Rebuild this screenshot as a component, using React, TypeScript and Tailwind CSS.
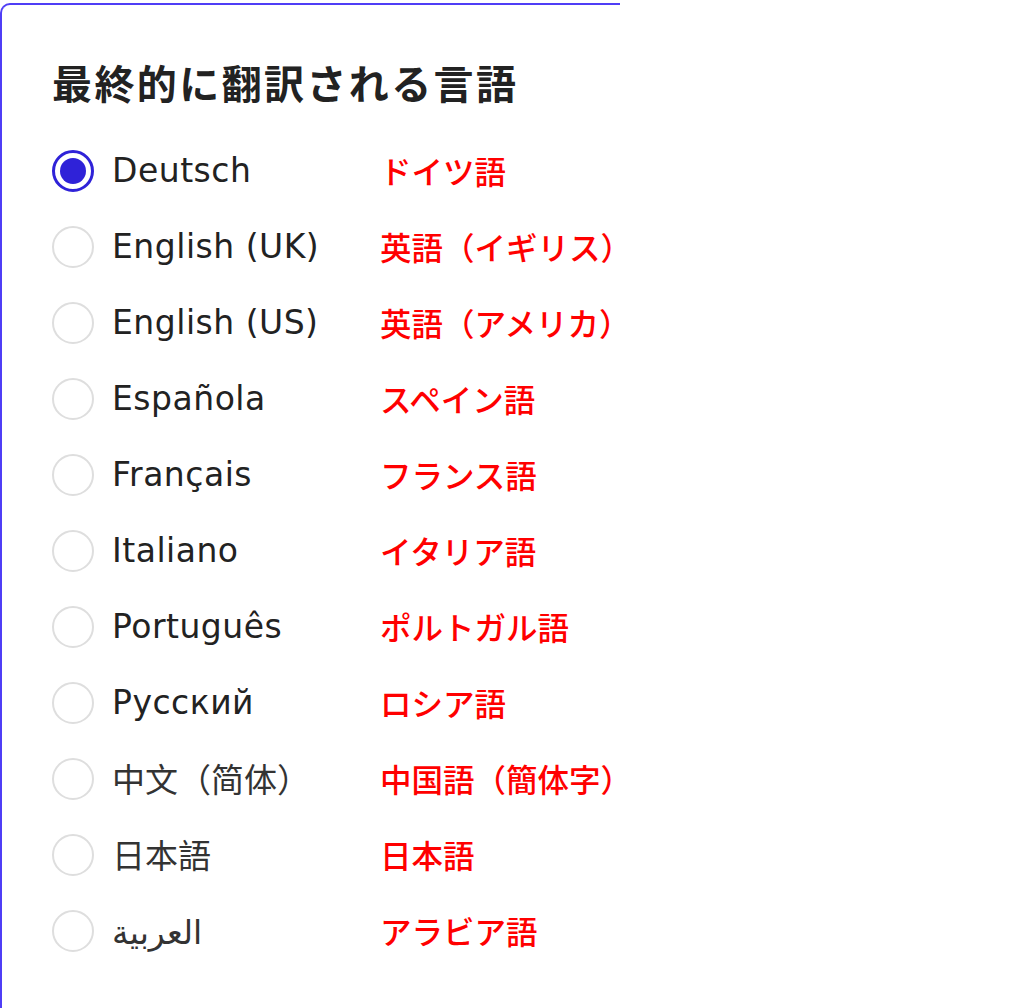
import React from "react";

const rows: [string, string, boolean?][] = [
  ["Deutsch", "ドイツ語"],
  ["English (UK)", "英語（イギリス）"],
  ["English (US)", "英語（アメリカ）"],
  ["Española", "スペイン語"],
  ["Français", "フランス語"],
  ["Italiano", "イタリア語"],
  ["Português", "ポルトガル語"],
  ["Русский", "ロシア語"],
  ["中文（简体）", "中国語（簡体字）", true],
  ["日本語", "日本語", true],
  ["العربية", "アラビア語", true],
];

export default function App() {
  return (
    <div className="w-[1024px] h-[1008px] bg-white overflow-hidden pt-[3px]">
      <div className="w-[620px] h-[1010px] border-l-2 border-t-2 border-[#4f3ef6] rounded-tl-[10px] pl-[50px] pt-[52px]">
        <h1 className="text-[40px] leading-[50px] font-bold text-[#222] tracking-[2.4px] whitespace-nowrap" style={{ fontFamily: '"Noto Sans CJK JP", sans-serif' }}>
          最終的に翻訳される言語
        </h1>
        <div className="mt-[26px] flex flex-col">
          {rows.map(([label, jp, cjk], i) => (
            <div key={i} className="h-[76px] flex items-center">
              <div className="w-[60px] shrink-0 flex items-center">
                {i === 0 ? (
                  <div className="w-[42px] h-[42px] rounded-full border-[3px] border-[#2f22d8] flex items-center justify-center">
                    <div className="w-[26px] h-[26px] rounded-full bg-[#2f22d8]" />
                  </div>
                ) : (
                  <div className="w-[42px] h-[42px] rounded-full border-[2.5px] border-[#dedede]" />
                )}
              </div>
              <div
                className={`w-[268px] shrink-0 whitespace-nowrap ${cjk ? "text-[33px] text-[#333] font-normal" : "text-[33px] tracking-[0.5px] text-[#222] font-normal"}`}
                style={{ fontFamily: cjk ? '"Noto Sans CJK SC", "DejaVu Sans", sans-serif' : '"DejaVu Sans", sans-serif' }}
              >
                {label}
              </div>
              <div className="text-[31.5px] font-medium text-[#ff0000] whitespace-nowrap" style={{ fontFamily: '"Noto Sans CJK JP", sans-serif' }}>
                {jp}
              </div>
            </div>
          ))}
        </div>
      </div>
    </div>
  );
}
